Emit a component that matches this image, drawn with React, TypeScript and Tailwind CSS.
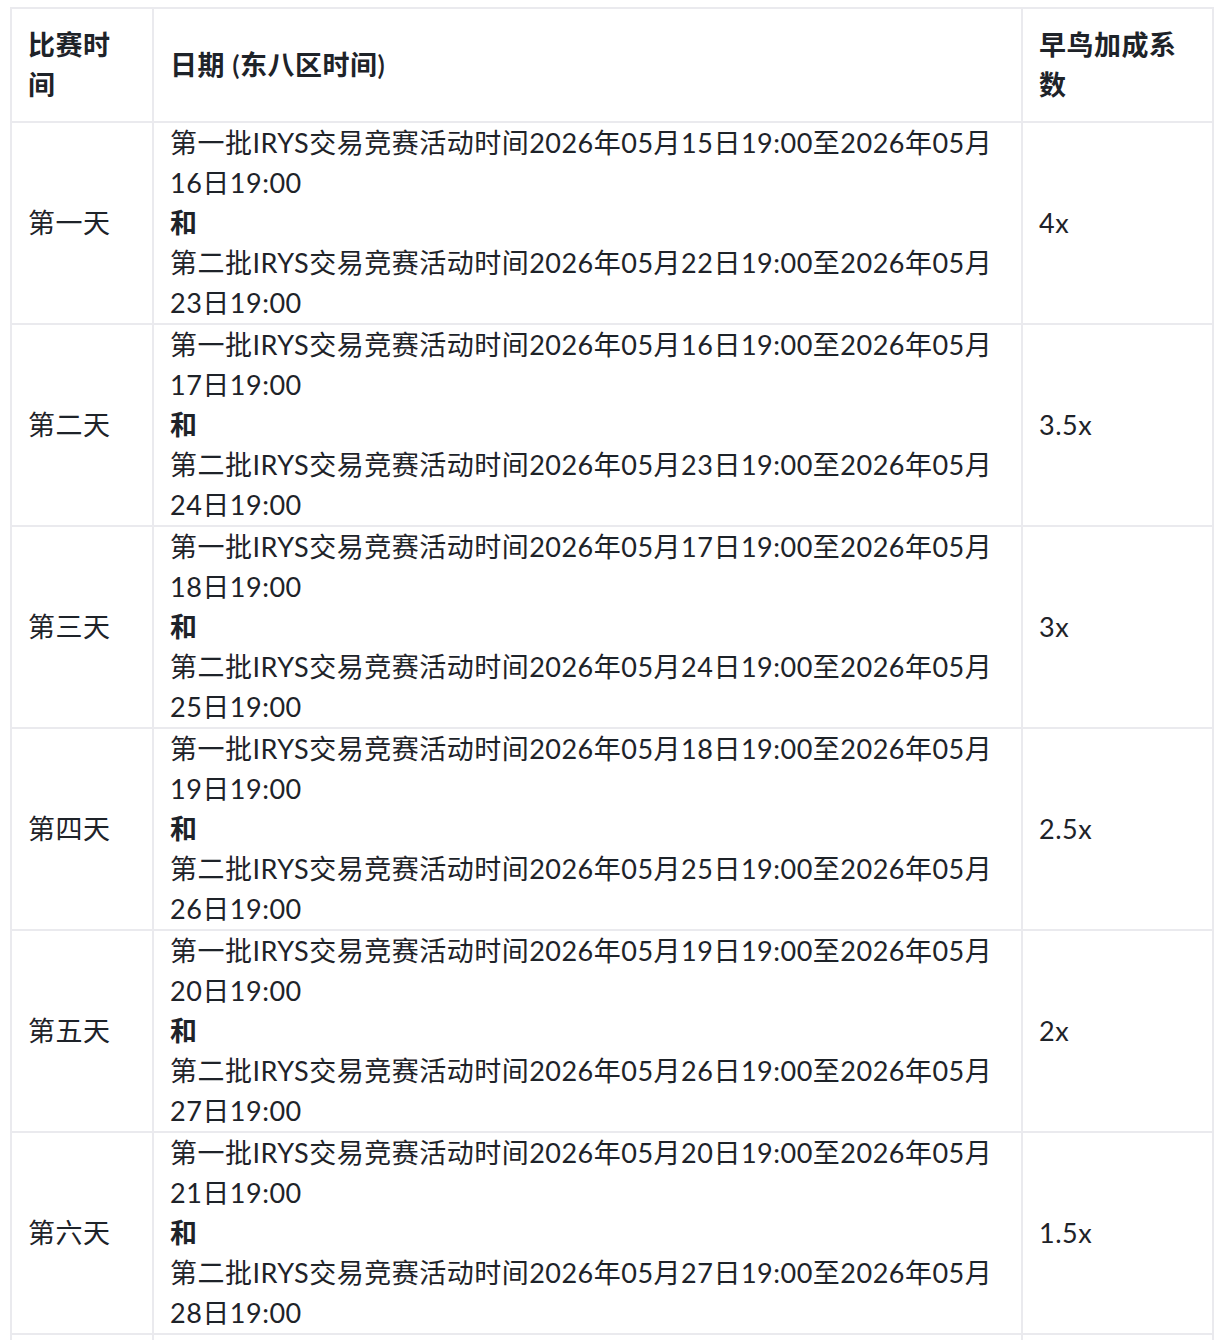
const rows = [
  { day: "第一天", a: ["15", "16"], b: ["22", "23"], bonus: "4x" },
  { day: "第二天", a: ["16", "17"], b: ["23", "24"], bonus: "3.5x" },
  { day: "第三天", a: ["17", "18"], b: ["24", "25"], bonus: "3x" },
  { day: "第四天", a: ["18", "19"], b: ["25", "26"], bonus: "2.5x" },
  { day: "第五天", a: ["19", "20"], b: ["26", "27"], bonus: "2x" },
  { day: "第六天", a: ["20", "21"], b: ["27", "28"], bonus: "1.5x" },
];

const Range = ({ batch, d }: { batch: string; d: string[] }) => (
  <>
    <div className="whitespace-nowrap">
      {batch}IRYS交易竞赛活动时间2026年05月{d[0]}日19:00至2026年05月
    </div>
    <div className="whitespace-nowrap">{d[1]}日19:00</div>
  </>
);

const cell = "border-2 border-[#eaeaee] px-4 text-left align-middle";

export default function App() {
  return (
    <div
      className="bg-white px-[10px] pt-[7px] text-[#1e2329] text-[27px] leading-[40px] tracking-[0.5px]"
      style={{ fontFamily: 'Lato, "Noto Sans CJK SC", sans-serif' }}
    >
      <table className="w-[1204px] table-fixed border-collapse border-2 border-[#eaeaee]">
        <colgroup>
          <col className="w-[142px]" />
          <col className="w-[869px]" />
          <col />
        </colgroup>
        <thead>
          <tr className="h-[114px]">
            <th className={`${cell} py-4 font-semibold`}>比赛时间</th>
            <th className={`${cell} py-4 font-semibold`}>日期 (东八区时间)</th>
            <th className={`${cell} py-4 font-semibold`}>早鸟加成系数</th>
          </tr>
        </thead>
        <tbody>
          {rows.map((r) => (
            <tr key={r.day} className="h-[202px]">
              <td className={cell}>{r.day}</td>
              <td className={cell}>
                <Range batch="第一批" d={r.a} />
                <div className="font-semibold">和</div>
                <Range batch="第二批" d={r.b} />
              </td>
              <td className={cell}>{r.bonus}</td>
            </tr>
          ))}
          {/* next row only shows its borders at the bottom edge */}
          <tr className="h-[202px]">
            <td className={cell}></td>
            <td className={cell}></td>
            <td className={cell}></td>
          </tr>
        </tbody>
      </table>
    </div>
  );
}
